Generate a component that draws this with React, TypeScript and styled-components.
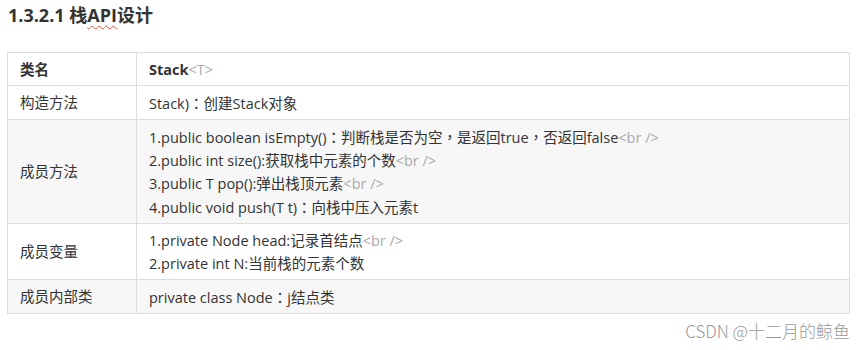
import styled, { createGlobalStyle } from "styled-components"

const GlobalStyle = createGlobalStyle`
    html, body {
        margin: 0;
        padding: 0;
        background: #fff;
    }
    body {
        font-family: "Open Sans", "Noto Sans CJK SC", sans-serif;
        color: #333;
    }
`

const StyledPage = styled.div`
    width: 865px;
    height: 350px;
    box-sizing: border-box;
    padding: 3px 15px 0 7px;
    display: flex;
    flex-direction: column;
    overflow: hidden;
`

const StyledH3 = styled.h3`
    font-size: 18px;
    font-weight: 700;
    line-height: 24px;
    margin: 0 0 25px 1px;
    color: #333;
`

const Squiggle = styled.span`
    text-decoration: underline wavy #e0533e;
    text-decoration-thickness: 1px;
    text-underline-offset: 3px;
`

const StyledTable = styled.table`
    width: 100%;
    border-collapse: collapse;
    font-size: 14.5px;
    line-height: 23px;
    color: #333;
    text-spacing-trim: space-all;
`

const Row = styled.tr<{ $shade?: boolean }>`
    background: ${p => (p.$shade ? "#f7f7f7" : "#fff")};
`

const Cell = styled.td<{ $head?: boolean; $narrow?: boolean }>`
    border: 1px solid #ddd;
    padding: 4.5px 12px;
    vertical-align: middle;
    width: ${p => (p.$narrow ? "104px" : "auto")};
    font-weight: ${p => (p.$head ? 700 : 400)};
`

const Tag = styled.span`
    color: #aaa;
    font-weight: 400;
`

// full-width punctuation sits centred in the reference
const Punct = styled.span`
    font-family: "Noto Sans CJK TC", sans-serif;
`

const Watermark = styled.div`
    align-self: flex-end;
    margin-top: 4px;
    font-size: 17px;
    color: #999;
    font-family: "Noto Sans CJK SC", sans-serif;
    font-weight: 300;
`

const Br = () => <Tag>&lt;br /&gt;</Tag>

export default function App() {
    return (
        <StyledPage>
            <GlobalStyle />
            <StyledH3>1.3.2.1 栈<Squiggle>API</Squiggle>设计</StyledH3>
            <StyledTable>
                <tbody>
                    <Row>
                        <Cell $head $narrow>类名</Cell>
                        <Cell $head>Stack<Tag>&lt;T&gt;</Tag></Cell>
                    </Row>
                    <Row>
                        <Cell $narrow>构造方法</Cell>
                        <Cell>Stack)<Punct>：</Punct>创建Stack对象</Cell>
                    </Row>
                    <Row $shade>
                        <Cell $narrow>成员方法</Cell>
                        <Cell>
                            1.public boolean isEmpty()<Punct>：</Punct>判断栈是否为空<Punct>，</Punct>是返回true<Punct>，</Punct>否返回false<Br /><br />
                            2.public int size():获取栈中元素的个数<Br /><br />
                            3.public T pop():弹出栈顶元素<Br /><br />
                            4.public void push(T t)<Punct>：</Punct>向栈中压入元素t
                        </Cell>
                    </Row>
                    <Row>
                        <Cell $narrow>成员变量</Cell>
                        <Cell>
                            1.private Node head:记录首结点<Br /><br />
                            2.private int N:当前栈的元素个数
                        </Cell>
                    </Row>
                    <Row $shade>
                        <Cell $narrow>成员内部类</Cell>
                        <Cell>private class Node<Punct>：</Punct>j结点类</Cell>
                    </Row>
                </tbody>
            </StyledTable>
            <Watermark>CSDN @十二月的鲸鱼</Watermark>
        </StyledPage>
    )
}
